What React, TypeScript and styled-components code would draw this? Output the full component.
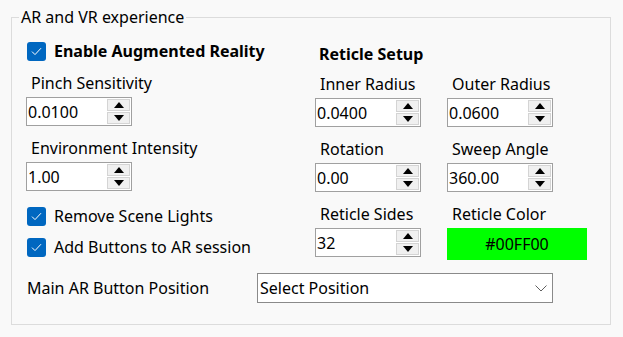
import React from 'react';
import styled, { createGlobalStyle } from 'styled-components';

const colors = {
  page: '#f9f9f9',
  groupBorder: '#dcdcdc',
  text: '#000000',
  inputBorder: '#a0a0a0',
  spinBg: '#f0f0f0',
  spinBorder: '#d4d4d4',
  accent: '#0067c0',
  selectBorder: '#8a8a8a',
  chevron: '#606060',
};

const GlobalStyle = createGlobalStyle`
  html, body {
    margin: 0;
    padding: 0;
    background: ${colors.page};
  }
  body {
    font-family: 'Noto Sans', 'Open Sans', 'Liberation Sans', sans-serif;
    font-size: 16px;
    color: ${colors.text};
  }
`;

type SpinnerProps = { value: string };
type FieldProps = { label: string; value: string };
type CheckProps = { label: string; bold?: boolean };

const Spinner: React.FC<SpinnerProps> = ({ value }) => (
  <SpinBox>
    <SpinInput defaultValue={value} />
    <SpinButtons>
      <SpinButton aria-label="up">
        <svg width="10" height="6" viewBox="0 0 10 6">
          <path d="M0 6 L5 0 L10 6 Z" fill="#000" />
        </svg>
      </SpinButton>
      <SpinButton aria-label="down">
        <svg width="10" height="6" viewBox="0 0 10 6">
          <path d="M0 0 L10 0 L5 6 Z" fill="#000" />
        </svg>
      </SpinButton>
    </SpinButtons>
  </SpinBox>
);

const Field: React.FC<FieldProps> = ({ label, value }) => (
  <FieldWrap>
    <Label>{label}</Label>
    <Spinner value={value} />
  </FieldWrap>
);

const Check: React.FC<CheckProps> = ({ label, bold }) => (
  <CheckRow>
    <CheckBox>
      <svg width="11" height="9" viewBox="0 0 11 9">
        <path d="M1 4.6 L4 7.6 L10 1.2" stroke="#fff" strokeWidth="1" fill="none" />
      </svg>
    </CheckBox>
    <CheckText bold={bold}>{label}</CheckText>
  </CheckRow>
);

export default function App() {
  return (
    <>
      <GlobalStyle />
      <Page>
        <Group>
          <Legend>AR and VR experience</Legend>
          <Columns>
            <LeftColumn>
              <Check label="Enable Augmented Reality" bold />
              <Field label="Pinch Sensitivity" value="0.0100" />
              <Field label="Environment Intensity" value="1.00" />
              <Checks>
                <Check label="Remove Scene Lights" />
                <Check label="Add Buttons to AR session" />
              </Checks>
            </LeftColumn>
            <RightColumn>
              <Heading>Reticle Setup</Heading>
              <Field label="Inner Radius" value="0.0400" />
              <Field label="Outer Radius" value="0.0600" />
              <Field label="Rotation" value="0.00" />
              <Field label="Sweep Angle" value="360.00" />
              <Field label="Reticle Sides" value="32" />
              <FieldWrap>
                <Label>Reticle Color</Label>
                <ColorSwatch>#00FF00</ColorSwatch>
              </FieldWrap>
            </RightColumn>
          </Columns>
          <BottomRow>
            <BottomLabel>Main AR Button Position</BottomLabel>
            <Select>
              <span>Select Position</span>
              <svg width="12" height="7" viewBox="0 0 12 7">
                <path d="M0.5 0.5 L6 6 L11.5 0.5" stroke={colors.chevron} strokeWidth="1" fill="none" />
              </svg>
            </Select>
          </BottomRow>
        </Group>
      </Page>
    </>
  );
}

const Page = styled.div`
  width: 623px;
  height: 337px;
  padding: 7px 0 0 11px;
  box-sizing: border-box;
`;

const Group = styled.fieldset`
  width: 600px;
  height: 318px;
  margin: 0;
  padding: 0;
  box-sizing: border-box;
  border: 1px solid ${colors.groupBorder};
  display: flex;
  flex-direction: column;
`;

const Legend = styled.legend`
  margin-left: 7px;
  padding: 0 2px;
  font-size: 16px;
  line-height: 20px;
`;

const Columns = styled.div`
  display: flex;
  padding: 15px 0 0 14px;
`;

const LeftColumn = styled.div`
  width: 289px;
  display: flex;
  flex-direction: column;
  gap: 12px;
`;

const RightColumn = styled.div`
  display: grid;
  grid-template-columns: 132px 140px;
  row-gap: 12px;
  align-items: start;
`;

const Heading = styled.div`
  grid-column: 1 / span 2;
  font-weight: 700;
  line-height: 20px;
  margin: 2px 0 -2px 4px;
`;

const FieldWrap = styled.div`
  display: flex;
  flex-direction: column;
`;

const Label = styled.div`
  line-height: 20px;
  margin: 0 0 4px 5px;
  white-space: nowrap;
`;

const SpinBox = styled.div`
  width: 106px;
  height: 29px;
  box-sizing: border-box;
  border: 1px solid ${colors.inputBorder};
  background: #fff;
  display: flex;
`;

const SpinInput = styled.input`
  flex: 1;
  min-width: 0;
  border: none;
  outline: none;
  background: transparent;
  font: inherit;
  padding: 0 0 0 1px;
  color: ${colors.text};
`;

const SpinButtons = styled.div`
  width: 23px;
  display: flex;
  flex-direction: column;
  padding: 1px 1px 1px 0;
  gap: 1px;
`;

const SpinButton = styled.div`
  flex: 1;
  background: ${colors.spinBg};
  border: 1px solid ${colors.spinBorder};
  display: flex;
  align-items: center;
  justify-content: center;
`;

const Checks = styled.div`
  display: flex;
  flex-direction: column;
  gap: 12px;
  margin-top: 4px;
`;

const CheckRow = styled.label`
  display: flex;
  align-items: center;
  gap: 8px;
  margin-left: 1px;
  line-height: 19px;
`;

const CheckBox = styled.span`
  width: 19px;
  height: 19px;
  border-radius: 3px;
  background: ${colors.accent};
  display: flex;
  align-items: center;
  justify-content: center;
`;

const CheckText = styled.span<{ bold?: boolean }>`
  font-weight: ${props => (props.bold ? 700 : 400)};
  white-space: nowrap;
`;

const ColorSwatch = styled.div`
  width: 140px;
  height: 32px;
  background: #00ff00;
  display: flex;
  align-items: center;
  justify-content: center;
`;

const BottomRow = styled.div`
  display: flex;
  align-items: center;
  padding: 13px 0 0 15px;
`;

const BottomLabel = styled.div`
  width: 230px;
  white-space: nowrap;
`;

const Select = styled.div`
  width: 296px;
  height: 30px;
  box-sizing: border-box;
  border: 1px solid ${colors.selectBorder};
  background: #fff;
  display: flex;
  align-items: center;
  justify-content: space-between;
  padding: 0 5px 0 2px;
`;
